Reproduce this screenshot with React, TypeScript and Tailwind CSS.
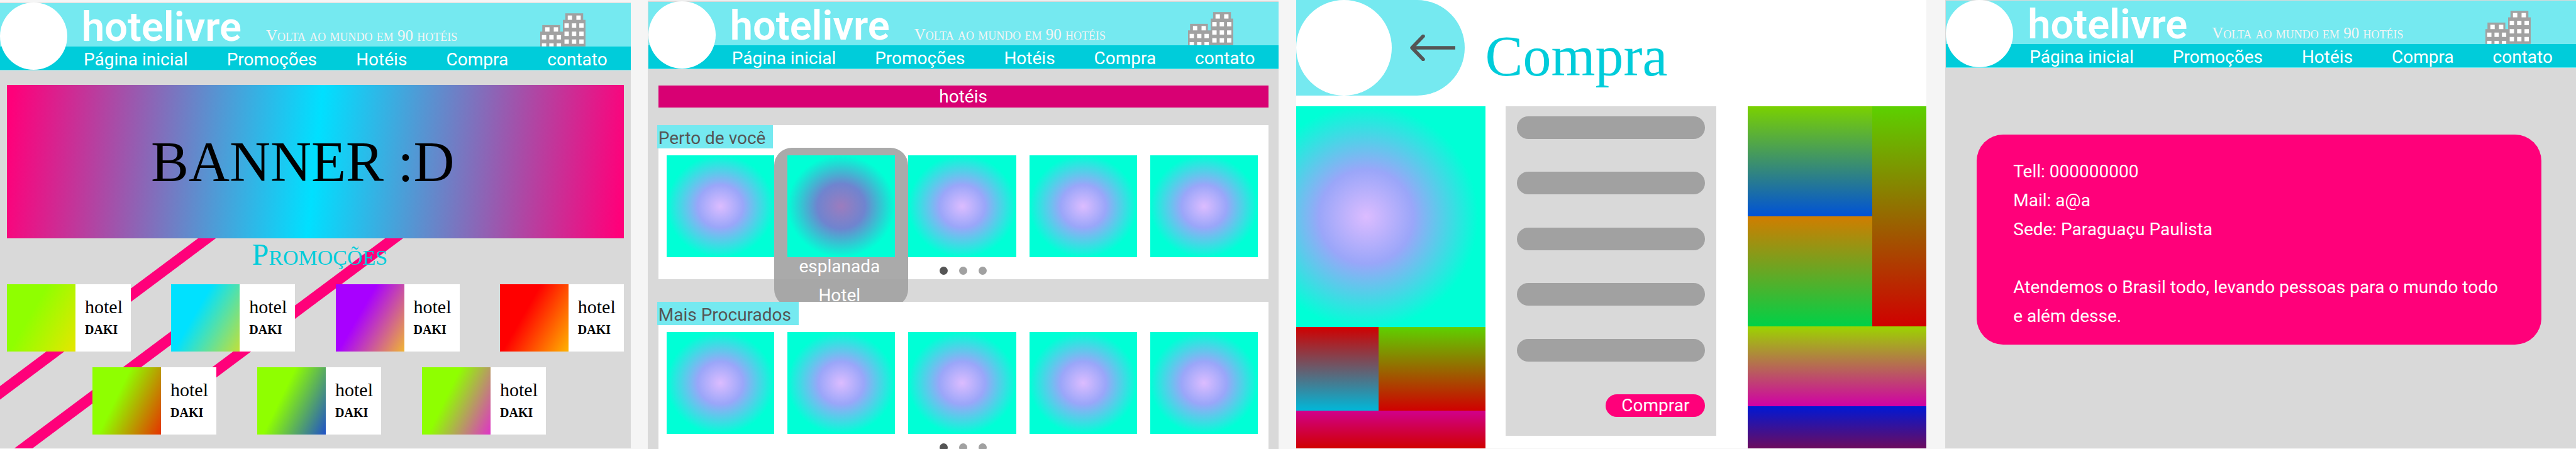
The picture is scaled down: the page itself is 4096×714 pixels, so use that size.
import React from "react";

const SERIF = "font-['Liberation_Serif',serif]";

const NAV_LINKS = ["Página inicial", "Promoções", "Hotéis", "Compra", "contato"];

function Buildings() {
  const windows: [number, number, number][] = [
    [63.2, 5, 10],
    [83, 5, 10],
    [55.7, 23, 10],
    [72.7, 23, 10],
    [89.7, 23, 10],
    [55.7, 42, 10],
    [72.7, 42, 10],
    [89.7, 42, 10],
    [55.7, 60, 10],
    [72.7, 60, 10],
    [89.7, 60, 10],
    [11.3, 32, 10],
    [31.1, 32, 10],
    [3.8, 50, 10],
    [20.8, 50, 10],
    [37.8, 50, 10],
    [3.8, 69, 7],
    [20.8, 69, 7],
    [37.8, 69, 7],
  ];
  return (
    <svg viewBox="0 0 104 76" className="h-[53px] w-[72px] shrink-0 self-end" aria-hidden="true">
      <g fill="#a1a1a1">
        <rect x="57.6" y="0" width="41" height="16" />
        <rect x="52" y="15" width="52" height="61" />
        <rect x="4.7" y="27" width="41" height="16" />
        <rect x="0" y="42" width="52.5" height="34" />
      </g>
      <g fill="#ffffff">
        {windows.map(([x, y, h]) => (
          <rect key={`${x}-${y}`} x={x} y={y} width="10" height={h} />
        ))}
      </g>
    </svg>
  );
}

function SiteHeader() {
  return (
    <header className="relative flex h-[107px] flex-col bg-[#75e9f0]">
      <div className="flex h-[69px] items-baseline pr-[72px] pl-[130px]">
        <span className="w-[252px] font-['Roboto',sans-serif] text-[65px] leading-[77px] font-semibold text-white">
          hotelivre
        </span>
        <span className="ml-[41px] font-['Liberation_Serif',serif] text-[25px] whitespace-nowrap text-[#f5f5f5] [font-variant:small-caps]">
          Volta ao mundo em 90 hotéis
        </span>
        <span className="grow" />
        <Buildings />
      </div>
      <nav className="flex h-[37px] justify-between bg-[#00ccda] pr-[37px] pl-[133px] text-[28px] leading-[42px] text-white">
        {NAV_LINKS.map((label) => (
          <a key={label} href="#" className="whitespace-nowrap">
            {label}
          </a>
        ))}
      </nav>
      <div className="absolute -top-px left-0 size-[107px] rounded-full bg-white" />
    </header>
  );
}

function HotelCard({ image }: { image: string }) {
  return (
    <a href="#" className={`flex h-[107px] w-[197px] bg-white text-black ${SERIF}`}>
      <span className={`w-[109px] ${image}`} />
      <span className="flex flex-col pt-[18px] pl-[15px] leading-[36px]">
        <span className="text-[30px]">hotel</span>
        <span className="text-[20px] font-bold">DAKI</span>
      </span>
    </a>
  );
}

const FIRST_ROW = [
  "bg-[linear-gradient(120deg,#8fff00_38%,#e6e600)]",
  "bg-[linear-gradient(120deg,#00e1ff_38%,#c2e038)]",
  "bg-[linear-gradient(120deg,#a800ff_38%,#f0b433)]",
  "bg-[linear-gradient(120deg,#ff0000_38%,#ffb300)]",
];

const SECOND_ROW = [
  "bg-[linear-gradient(116deg,#8fff00_38%,#e63200)]",
  "bg-[linear-gradient(116deg,#8fff00_38%,#1f52c8)]",
  "bg-[linear-gradient(116deg,#8fff00_38%,#e032c8)]",
];

function HomeScreen() {
  return (
    <section className="relative mt-1 mb-px flex flex-1 flex-col overflow-hidden bg-[#d9d9d9] pt-px">
      <SiteHeader />
      <svg
        viewBox="0 544 1438 480"
        preserveAspectRatio="none"
        className="absolute bottom-0 left-0 h-[335px] w-full"
        fill="#ff007a"
        aria-hidden="true"
      >
        <path d="M453.5 544H494L0 913V882Z" />
        <path d="M880 544H921L416 920H375Z" />
        <path d="M440 720H481L74 1024H32.6Z" />
      </svg>
      <div
        className={`relative mx-[11px] mt-[23px] flex h-[244px] items-center bg-[linear-gradient(96deg,#ff007a_1%,#00e0ff_50%,#ff007a_99%)] pl-[229px] text-[90px] text-black ${SERIF}`}
      >
        BANNER :D
      </div>
      <h2
        className={`relative mb-[22px] pl-[14px] text-center text-[48px] leading-[51px] text-[#00ccda] [font-variant:small-caps] ${SERIF}`}
      >
        Promoções
      </h2>
      <div className="relative mx-[11px] flex justify-between">
        {FIRST_ROW.map((image) => (
          <HotelCard key={image} image={image} />
        ))}
      </div>
      <div className="relative mt-[25px] flex gap-[65px] pl-[147px]">
        {SECOND_ROW.map((image) => (
          <HotelCard key={image} image={image} />
        ))}
      </div>
    </section>
  );
}

const TILE = "bg-[radial-gradient(closest-side,#dcbcff,#9aa6f9_42%,#00ffd6)]";
const TILE_ACTIVE = "bg-[radial-gradient(closest-side,#9c7cbe,#6f84cf_44%,#00ffd6)]";

function Dots() {
  return (
    <div className="mt-[15px] flex justify-center gap-[18px]">
      <button aria-label="Página 1" className="size-[13px] rounded-full bg-[#555555]" />
      <button aria-label="Página 2" className="size-[13px] rounded-full bg-[#a1a1a1]" />
      <button aria-label="Página 3" className="size-[13px] rounded-full bg-[#a1a1a1]" />
    </div>
  );
}

function HotelShelf({ title, active }: { title: string; active?: number }) {
  return (
    <div className="relative mr-[16px] ml-[17px] bg-white pb-[7px]">
      <h3 className="-ml-0.5 h-[37px] w-fit bg-[#75e9f0] pr-[12px] pl-[2px] text-[28px] leading-[41px] text-[#555555]">
        {title}
      </h3>
      <div className="mt-[11px] flex gap-[21px] pr-[16px] pl-[13px]">
        {[0, 1, 2, 3, 4].map((i) =>
          i === active ? (
            <div key={i} className="relative h-[162px] flex-1">
              <div className="absolute -inset-x-[21px] -top-[12px] h-[253px] rounded-[28px] bg-[#a1a1a1]/90 pt-[166px] pr-[6px] text-center text-[28px] leading-[46px] text-white">
                <p>esplanada</p>
                <p>Hotel</p>
              </div>
              <div className={`relative h-full ${TILE_ACTIVE}`} />
            </div>
          ) : (
            <div key={i} className={`h-[162px] flex-1 ${TILE}`} />
          ),
        )}
      </div>
      <Dots />
    </div>
  );
}

function HotelsScreen() {
  return (
    <section className="mt-px ml-[27px] flex flex-1 flex-col overflow-hidden bg-[#d9d9d9] pt-0.5">
      <div className="pl-px">
        <SiteHeader />
      </div>
      <h2 className="mt-[26px] mr-[16px] ml-[17px] h-[35px] bg-[#d80073] text-center text-[28px] leading-[35px] text-white">
        hotéis
      </h2>
      <div className="mt-[28px] flex flex-col gap-[36px]">
        <HotelShelf title="Perto de você" active={1} />
        <HotelShelf title="Mais Procurados" />
      </div>
    </section>
  );
}

function PurchaseScreen() {
  return (
    <section className="mb-px ml-[28px] flex flex-1 flex-col overflow-hidden bg-white">
      <header className="flex h-[152px] items-center">
        <div className="flex h-[152px] w-[268px] items-center rounded-r-full bg-[#75e9f0]">
          <div className="size-[152px] rounded-full bg-white" />
          <button aria-label="Voltar" className="ml-[29px]">
            <svg
              viewBox="0 0 103 60"
              className="h-[42px] w-[72px]"
              fill="none"
              stroke="#555555"
              strokeWidth="8"
              strokeLinejoin="round"
              aria-hidden="true"
            >
              <path d="M103 30H5" />
              <path d="M30 3.500 4.500 30 30 56.500" strokeLinecap="round" />
            </svg>
          </button>
        </div>
        <h1 className={`ml-[33px] pt-7 text-[90px] leading-none text-[#00ccda] ${SERIF}`}>Compra</h1>
      </header>
      <div className="mt-[17px] flex flex-1">
        <div className="flex flex-[302] flex-col">
          <div className="flex-[351] bg-[radial-gradient(circle_178px_at_37%_50%,#dcbcff,#9aa6f9_42%,#00ffd6)]" />
          <div className="flex flex-[133]">
            <div className="flex-[132] bg-[linear-gradient(#d00000,#00b8d9)]" />
            <div className="flex-[170] bg-[linear-gradient(#5ed100,#d00000)]" />
          </div>
          <div className="flex-[60] bg-[linear-gradient(#d0008c,#d00000)]" />
        </div>
        <div className="mb-[20px] ml-[32px] flex flex-[335]">
          <form className="flex w-full flex-col justify-between bg-[#d9d9d9] px-[18px] pt-[16px] pb-[30px]">
            {[1, 2, 3, 4, 5].map((n) => (
              <input
                key={n}
                aria-label={`Campo ${n}`}
                className="h-[36px] w-full rounded-full bg-[#a1a1a1] px-4 text-[20px] text-white"
              />
            ))}
            <button
              type="button"
              className="h-[36px] w-[158px] self-end rounded-full bg-[#ff007a] text-[28px] leading-[34px] text-white"
            >
              Comprar
            </button>
          </form>
        </div>
        <div className="ml-[50px] flex flex-[284] flex-col">
          <div className="flex flex-[350]">
            <div className="flex flex-[198] flex-col">
              <div className="flex-1 bg-[linear-gradient(#7ad100,#0052d6)]" />
              <div className="flex-1 bg-[linear-gradient(#d07d00,#00d147)]" />
            </div>
            <div className="flex-[86] bg-[linear-gradient(#5cd100,#d00000)]" />
          </div>
          <div className="flex-[127] bg-[linear-gradient(#9cd400,#d000a6)]" />
          <div className="flex-[67] bg-[linear-gradient(#0018d4,#6c0c5e)]" />
        </div>
      </div>
    </section>
  );
}

function ContactScreen() {
  return (
    <section className="mb-px ml-[30px] flex flex-1 flex-col overflow-hidden bg-[#d9d9d9] pt-px">
      <div className="pl-px">
        <SiteHeader />
      </div>
      <address className="mt-[106px] mr-[55px] ml-[50px] rounded-[42px] bg-[#ff007a] px-[58px] pt-[36px] pb-[22px] text-[28px] leading-[46px] text-white not-italic">
        <p>Tell: 000000000</p>
        <p>Mail: a@a</p>
        <p>Sede: Paraguaçu Paulista</p>
        <p className="mt-[46px]">
          Atendemos o Brasil todo, levando pessoas para o mundo todo e além desse.
        </p>
      </address>
    </section>
  );
}

export default function App() {
  return (
    <main className="flex h-screen overflow-hidden bg-[#f5f5f5] font-['Roboto',sans-serif]">
      <HomeScreen />
      <HotelsScreen />
      <PurchaseScreen />
      <ContactScreen />
    </main>
  );
}
